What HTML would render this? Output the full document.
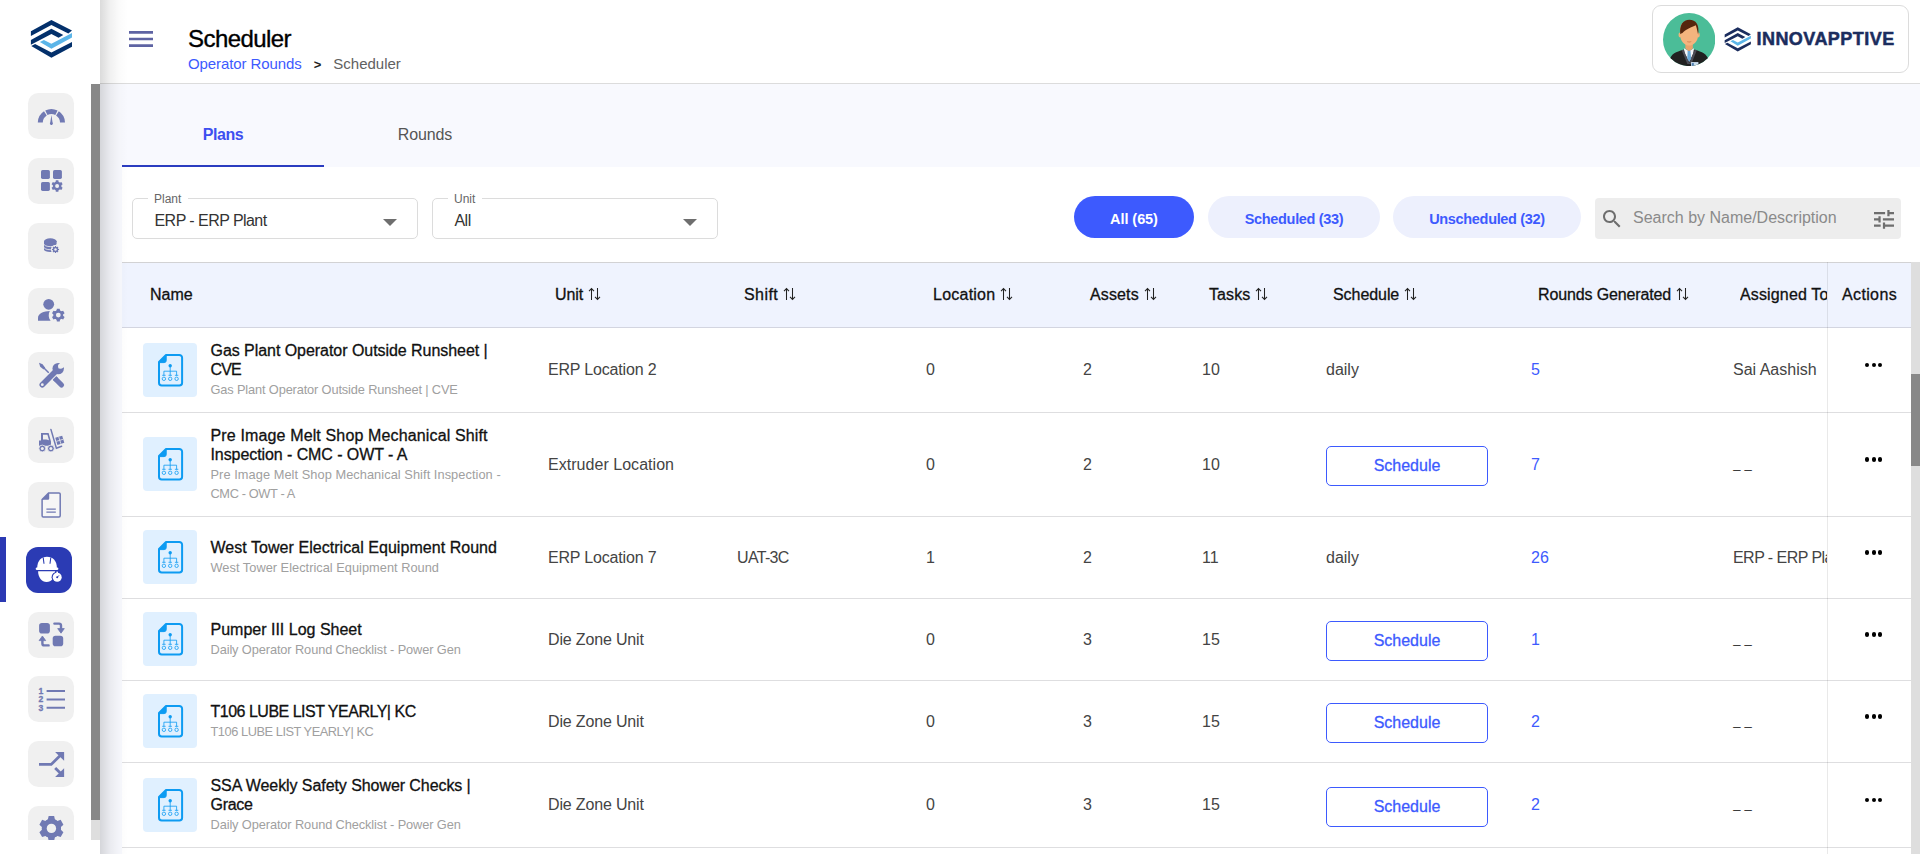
<!DOCTYPE html>
<html lang="en">
<head>
<meta charset="utf-8">
<title>Scheduler</title>
<style>
*{box-sizing:border-box;margin:0;padding:0}
html,body{width:1920px;height:854px;overflow:hidden;background:#fff;font-family:"Liberation Sans",sans-serif;color:#000}
.abs{position:absolute}
#side{position:absolute;left:0;top:0;width:100px;height:854px;background:#fff}
.sb{position:absolute;left:28px;width:46px;height:46px;border-radius:10.5px;background:#f0f0f0}
.sb svg{position:absolute;left:0;top:0;width:46px;height:46px}
.sb.act{left:26px;background:#2b3bb4;border-radius:12px}
#sscroll{position:absolute;left:0;top:84px;width:91px;height:756px;overflow:hidden}
#sthumb{position:absolute;left:91px;top:84px;width:9px;height:736px;background:#888}
#strack{position:absolute;left:91px;top:820px;width:9px;height:20px;background:#dedede}
#actbar{position:absolute;left:0;top:537px;width:6px;height:65px;background:#2b39b3}
#main{position:absolute;left:100px;top:0;width:1820px;height:854px;background:#f8f9fe}
#hdr{position:absolute;left:0;top:0;width:1820px;height:84px;background:#fff;border-bottom:1px solid #dcdcdc}
#shadow{position:absolute;left:0;top:0;width:28px;height:854px;background:linear-gradient(to right,rgba(0,0,0,.14),rgba(0,0,0,.055) 38%,rgba(0,0,0,.015) 70%,rgba(0,0,0,0));pointer-events:none;z-index:50}
#title{position:absolute;left:88px;top:25px;font-size:24px;line-height:28px;color:#000;white-space:nowrap;letter-spacing:-0.56px;-webkit-text-stroke:0.35px #000}
#crumb{position:absolute;left:88px;top:54px;font-size:15px;line-height:19px;white-space:nowrap;color:#616161}
#crumb a{color:#3d5afe;text-decoration:none;letter-spacing:-0.09px}
#crumb b{font-weight:bold;color:#222;margin:0 12px 0 12px;font-size:13px}
#user{position:absolute;left:1552px;top:5px;width:257px;height:68px;border:1px solid #dcdcdc;border-radius:9px;background:#fff}
#brand{position:absolute;left:103.5px;top:22px;font-size:18px;line-height:22px;font-weight:bold;color:#1b2d5e;white-space:nowrap;letter-spacing:0.45px;-webkit-text-stroke:0.5px #1b2d5e}
.tab{position:absolute;top:84px;width:202px;height:83px;font-size:16px;line-height:102px;text-align:center;color:#555}
#panel{position:absolute;left:22px;top:167px;width:1798px;height:687px;background:#fff}
.sel{position:absolute;top:31px;width:286px;height:41px;border:1px solid #dcdcdc;border-radius:5px}
.sel .lb{position:absolute;left:15px;top:-7px;background:#fff;padding:0 7px 0 6px;font-size:12px;line-height:14px;color:#666}
.sel .vl{position:absolute;left:21.5px;top:12px;font-size:16px;line-height:19px;color:#333;white-space:nowrap;letter-spacing:-0.55px}
.sel .ar{position:absolute;right:20px;top:20px;width:0;height:0;border-left:7px solid transparent;border-right:7px solid transparent;border-top:7px solid #6e6e6e}
.pill{position:absolute;top:29px;height:42px;border-radius:21px;background:#edf0fd;color:#3d5afe;font-weight:bold;font-size:14.5px;line-height:46.5px;text-align:center;white-space:nowrap;letter-spacing:-0.33px}
.pill.on{background:#3d5afe;color:#fff}
#search{position:absolute;left:1473px;top:31px;width:306px;height:41px;border-radius:4px;background:#ededed}
#search span{position:absolute;left:38px;top:10px;font-size:16px;line-height:19px;color:#8a8a8a;white-space:nowrap}
#thead{position:absolute;left:0;top:95px;width:1789px;height:66px;background:#eff3fe;border-top:1px solid #d2d2d4;border-bottom:1px solid #d3d5e0}
.srt{position:absolute;top:24px}
#thead div{position:absolute;top:22px;font-size:16px;line-height:19px;color:#111;white-space:nowrap;-webkit-text-stroke:0.3px #111}
.row{position:absolute;left:0;width:1789px;border-bottom:1px solid #dedee0}
.ic{position:absolute;left:21px;width:54px;height:54px;border-radius:4px;background:#e0f0ff}
.nm{position:absolute;left:88.5px;white-space:nowrap;-webkit-text-stroke:0.3px #111;width:300px;font-size:16px;line-height:19px;color:#111}
.ds{position:absolute;left:88.5px;white-space:nowrap;width:300px;font-size:12.8px;line-height:19px;color:#a0a0a0}
.c{position:absolute;font-size:16px;line-height:19px;color:#444;white-space:nowrap}
.lk{color:#3d5afe}
.asg{width:94px;overflow:hidden}
.dash{font-size:13px;color:#1a1a1a;word-spacing:0.4px}
.btn{position:absolute;left:1204px;width:162px;height:40px;border:1px solid #3d5afe;border-radius:5px;color:#3d5afe;font-size:16px;line-height:38px;text-align:center;-webkit-text-stroke:0.3px #3d5afe}
#actcol{position:absolute;left:1705px;top:95px;width:84px;height:592px;border-left:1px solid rgba(0,0,0,.085)}
.dots{position:absolute;left:1743px;width:20px;height:6px}
.dots i{position:absolute;top:0;width:4.3px;height:4.3px;border-radius:50%;background:#000}
#vtrack{position:absolute;left:1789px;top:95px;width:9px;height:592px;background:#dedede}
#vthumb{position:absolute;left:1789px;top:207px;width:9px;height:92px;background:#888}
</style>
</head>
<body>
<svg width="0" height="0" style="position:absolute">
<defs>
<symbol id="docic" viewBox="0 0 54 54">
<path d="M23 12 H36.3 a2.8 2.8 0 0 1 2.8 2.8 V39.8 a2.8 2.8 0 0 1 -2.8 2.8 H18.8 a2.8 2.8 0 0 1 -2.8 -2.8 V19 Z" fill="none" stroke="#0d9bf2" stroke-width="2" stroke-linejoin="round"/>
<path d="M23.2 12 V17.6 a2 2 0 0 1 -2 2 H16 Z" fill="#0d9bf2" stroke="#0d9bf2" stroke-width="1" stroke-linejoin="round"/>
<circle cx="27.2" cy="22.7" r="1.7" fill="#0d9bf2"/>
<path d="M27.2 24 V32.5 M20.9 32.5 V28.2 H33.6 V32.5 M19.2 32.3 H22.6 M25.5 32.3 H28.9 M31.9 32.3 H35.3" fill="none" stroke="#0d9bf2" stroke-width="0.8"/>
<circle cx="20.9" cy="35.8" r="1.7" fill="none" stroke="#0d9bf2" stroke-width="0.8"/>
<circle cx="27.2" cy="35.8" r="1.7" fill="none" stroke="#0d9bf2" stroke-width="0.8"/>
<circle cx="33.6" cy="35.8" r="1.7" fill="none" stroke="#0d9bf2" stroke-width="0.8"/>
</symbol>
</defs>
</svg>
<div id="side">
<svg class="abs" style="left:20px;top:8px" width="60" height="60" viewBox="0 0 854 854">
<polygon points="155,330 447,170 740,322 688,362 447,243 155,397" fill="#03306b"/>
<polygon points="155,457 447,297 616,385 549,423 447,370 155,522" fill="#03306b"/>
<polygon points="340,455 447,510 740,355 740,420 447,580 283,483" fill="#5bb5e8"/>
<polygon points="215,512 447,635 740,485 740,550 447,708 160,540" fill="#03306b"/>
</svg>
<div id="sscroll">
<div class="sb" style="top:9px"><svg viewBox="0 0 46 46"><path d="M9.80 29.60 A13.6 13.6 0 0 1 15.99 18.19 L18.72 22.39 A8.6 8.6 0 0 0 14.80 29.60Z" fill="#7079b3"/><path d="M17.23 17.48 A13.6 13.6 0 0 1 29.57 17.48 L27.30 21.94 A8.6 8.6 0 0 0 19.50 21.94Z" fill="#7079b3"/><path d="M30.81 18.19 A13.6 13.6 0 0 1 37.00 29.60 L32.00 29.60 A8.6 8.6 0 0 0 28.08 22.39Z" fill="#7079b3"/><path d="M23.4 22 L24.5 29.3 A1.5 1.5 0 1 1 22.3 29.3Z" fill="#7079b3"/></svg></div>
<div class="sb" style="top:74px"><svg viewBox="0 0 46 46"><rect x="13" y="12" width="8.9" height="8.9" rx="1.6" fill="#7079b3"/><rect x="25" y="12" width="8.9" height="8.9" rx="1.6" fill="#7079b3"/><rect x="13" y="24" width="8.9" height="8.9" rx="1.6" fill="#7079b3"/><circle cx="29.1" cy="28" r="4.2" fill="#7079b3"/><path d="M27.57 24.09 L27.83 22.34 L30.37 22.34 L30.63 24.09 L31.72 24.72 L33.37 24.07 L34.63 26.27 L33.25 27.37 L33.25 28.63 L34.63 29.73 L33.37 31.93 L31.72 31.28 L30.63 31.91 L30.37 33.66 L27.83 33.66 L27.57 31.91 L26.48 31.28 L24.83 31.93 L23.57 29.73 L24.95 28.63 L24.95 27.37 L23.57 26.27 L24.83 24.07 L26.48 24.72Z" fill="#7079b3"/><circle cx="29.1" cy="28" r="2.0" fill="#f0f0f0"/></svg></div>
<div class="sb" style="top:139px"><svg viewBox="0 0 46 46"><path d="M16 18.3 V26.5 a6.3 2.6 0 0 0 12.6 0 V18.3Z" fill="#7079b3"/><ellipse cx="22.3" cy="18.2" rx="6.3" ry="2.9" fill="#7079b3"/><path d="M16 21.2 a6.3 2.4 0 0 0 12.6 0 M16 24.3 a6.3 2.4 0 0 0 12.6 0" fill="none" stroke="#f0f0f0" stroke-width="0.8"/><circle cx="27.5" cy="26.5" r="4.6" fill="#f0f0f0"/><circle cx="27.5" cy="26.5" r="2.6" fill="#7079b3"/><path d="M26.81 23.99 L26.94 22.94 L28.06 22.94 L28.19 23.99 L28.79 24.24 L29.62 23.59 L30.41 24.38 L29.76 25.21 L30.01 25.81 L31.06 25.94 L31.06 27.06 L30.01 27.19 L29.76 27.79 L30.41 28.62 L29.62 29.41 L28.79 28.76 L28.19 29.01 L28.06 30.06 L26.94 30.06 L26.81 29.01 L26.21 28.76 L25.38 29.41 L24.59 28.62 L25.24 27.79 L24.99 27.19 L23.94 27.06 L23.94 25.94 L24.99 25.81 L25.24 25.21 L24.59 24.38 L25.38 23.59 L26.21 24.24Z" fill="#7079b3"/><circle cx="27.5" cy="26.5" r="1.2" fill="#f0f0f0"/></svg></div>
<div class="sb" style="top:204px"><svg viewBox="0 0 46 46"><circle cx="20.7" cy="16.3" r="5.4" fill="#7079b3"/><path d="M10 32.8 V30 C10 25.5 16 23.2 21.8 23.1 C20.2 26 20.3 30 22.6 32.8Z" fill="#7079b3"/><circle cx="30.3" cy="27.1" r="4.8" fill="#7079b3"/><path d="M28.55 22.63 L28.86 20.66 L31.74 20.66 L32.05 22.63 L33.29 23.35 L35.16 22.63 L36.60 25.13 L35.05 26.38 L35.05 27.82 L36.60 29.07 L35.16 31.57 L33.29 30.85 L32.05 31.57 L31.74 33.54 L28.86 33.54 L28.55 31.57 L27.31 30.85 L25.44 31.57 L24.00 29.07 L25.55 27.82 L25.55 26.38 L24.00 25.13 L25.44 22.63 L27.31 23.35Z" fill="#7079b3"/><circle cx="30.3" cy="27.1" r="2.4" fill="#f0f0f0"/></svg></div>
<div class="sb" style="top:268px"><svg viewBox="0 0 46 46"><path d="M11 10.8 L14.6 12.2 L17.2 15.8 L15.6 17.4 L12.2 14.8 Z" fill="#7079b3"/><path d="M15.5 15.5 L21 21" stroke="#7079b3" stroke-width="1.5" fill="none"/><path d="M27 26.5 L33.5 33" stroke="#7079b3" stroke-width="5.2" stroke-linecap="round" fill="none"/><path d="M24.6 27.4 L27.9 24.1 L30 26 L26.5 29.5Z" fill="#7079b3"/><path d="M14.3 32.7 L27.5 19.5" stroke="#f0f0f0" stroke-width="7.6" stroke-linecap="butt" fill="none"/><path d="M14.3 32.7 L27.5 19.5" stroke="#7079b3" stroke-width="5.6" stroke-linecap="round" fill="none"/><circle cx="30.2" cy="16.6" r="5.7" fill="#7079b3"/><path d="M30.4 16.4 L32.8 8.6 L39 14.4 Z" fill="#f0f0f0"/><circle cx="32.7" cy="14.1" r="2.7" fill="#f0f0f0"/><circle cx="14.3" cy="32.7" r="1.4" fill="#f0f0f0"/></svg></div>
<div class="sb" style="top:333px"><svg viewBox="0 0 46 46"><path d="M11 28.8 V23.4 H13 V16 H20.6 L23 24.5 V28.8Z" fill="#7079b3"/><path d="M15 17.8 H19.4 L21 23.2 L18.5 22.4 H15Z" fill="#f0f0f0"/><circle cx="14.3" cy="31.5" r="3.4" fill="#7079b3" stroke="#f0f0f0" stroke-width="0.8"/><circle cx="14.3" cy="31.5" r="1.5" fill="#f0f0f0"/><circle cx="22.9" cy="31.5" r="3.4" fill="#7079b3" stroke="#f0f0f0" stroke-width="0.8"/><circle cx="22.9" cy="31.5" r="1.5" fill="#f0f0f0"/><path d="M22.9 12.4 L28.4 31.2 L33.6 29.3" fill="none" stroke="#7079b3" stroke-width="1.5" stroke-linecap="round"/><g transform="rotate(-17 31.8 23.3)"><rect x="28.2" y="19.6" width="7.2" height="7.4" fill="#7079b3"/><path d="M31.8 19.6 V27 M28.2 23.3 H35.4" stroke="#f0f0f0" stroke-width="0.7"/></g></svg></div>
<div class="sb" style="top:398px"><svg viewBox="0 0 46 46"><path d="M20.8 10.9 H31 a1.2 1.2 0 0 1 1.2 1.2 V33.8 a1.2 1.2 0 0 1 -1.2 1.2 H15.3 a1.2 1.2 0 0 1 -1.2 -1.2 V17.6 Z" fill="#f6f6f6" stroke="#7079b3" stroke-width="1.5" stroke-linejoin="round"/><path d="M21.2 10.9 V16.6 a1.2 1.2 0 0 1 -1.2 1.2 H14.1 Z" fill="#7079b3"/><path d="M18.4 27.1 H27.8 M18.4 30.1 H27.8" stroke="#7079b3" stroke-width="1.3"/></svg></div>
<div class="sb act" style="top:463px"><svg viewBox="0 0 46 46"><path d="M11.2 21 C11.2 13.5 15.5 9.7 21 9.7 C26.6 9.7 30.9 13.5 30.9 21 Z" fill="#fff"/><rect x="9.7" y="20.4" width="22.7" height="2.6" rx="1.3" fill="#fff"/><path d="M17.2 10.5 L18 16.8 M24.8 10.5 L24 16.8" stroke="#2b3db2" stroke-width="1.1" fill="none"/><path d="M12.1 24.3 H29.1 C29.1 30.5 25.5 35 20.6 35 C15.7 35 12.1 30.5 12.1 24.3Z" fill="#fff"/><circle cx="31.2" cy="30.3" r="5.6" fill="#2b3db2"/><circle cx="31.2" cy="30.3" r="4.5" fill="#fff"/><rect x="30.4" y="24.6" width="1.6" height="1.6" fill="#fff"/><circle cx="31.2" cy="30.3" r="1" fill="#2b3db2"/><path d="M31.2 30.3 L33 28.4" stroke="#2b3db2" stroke-width="0.9"/></svg></div>
<div class="sb" style="top:528px"><svg viewBox="0 0 46 46"><rect x="11.1" y="10.9" width="10.8" height="10.7" rx="2.8" fill="#7079b3"/><rect x="24.7" y="23.7" width="10.5" height="10.5" rx="2.8" fill="#7079b3"/><path d="M26.4 11.6 H31 a2 2 0 0 1 2 2 V18" fill="none" stroke="#7079b3" stroke-width="2.4" stroke-linecap="round"/><path d="M29.7 16.6 H36.3 L33 21.2Z" fill="#7079b3" stroke="#7079b3" stroke-width="0.8" stroke-linejoin="round"/><path d="M20.6 33.4 H16.4 a2 2 0 0 1 -2 -2 V27" fill="none" stroke="#7079b3" stroke-width="2.4" stroke-linecap="round"/><path d="M11.1 28.6 H17.7 L14.4 24Z" fill="#7079b3" stroke="#7079b3" stroke-width="0.8" stroke-linejoin="round"/></svg></div>
<div class="sb" style="top:592px"><svg viewBox="0 0 46 46"><path d="M18.6 15.1 H37 M18.6 23.4 H37 M18.6 31.7 H37" stroke="#7079b3" stroke-width="2"/><text x="10.6" y="17.8" font-family="Liberation Sans, sans-serif" font-weight="bold" font-size="8.6" stroke="#7079b3" stroke-width="0.3" fill="#7079b3">1</text><text x="10.6" y="26.1" font-family="Liberation Sans, sans-serif" font-weight="bold" font-size="8.6" stroke="#7079b3" stroke-width="0.3" fill="#7079b3">2</text><text x="10.6" y="34.5" font-family="Liberation Sans, sans-serif" font-weight="bold" font-size="8.6" stroke="#7079b3" stroke-width="0.3" fill="#7079b3">3</text></svg></div>
<div class="sb" style="top:657px"><svg viewBox="0 0 46 46"><path d="M11 23.4 H23.2 L33 13.8" fill="none" stroke="#7079b3" stroke-width="2.8"/><path d="M27.1 10.9 H36.1 V19.7Z" fill="#7079b3"/><path d="M27.2 27 L33 32.8" fill="none" stroke="#7079b3" stroke-width="2.8"/><path d="M36.1 27.3 V36 H27.1Z" fill="#7079b3"/></svg></div>
<div class="sb" style="top:722px"><svg viewBox="0 0 46 46"><circle cx="23.4" cy="22.4" r="9.6" fill="#7079b3"/><path d="M19.89 13.46 L20.65 10.10 L26.15 10.10 L26.91 13.46 L29.39 14.90 L32.67 13.87 L35.42 18.63 L32.89 20.97 L32.89 23.83 L35.42 26.17 L32.67 30.93 L29.39 29.90 L26.91 31.34 L26.15 34.70 L20.65 34.70 L19.89 31.34 L17.41 29.90 L14.13 30.93 L11.38 26.17 L13.91 23.83 L13.91 20.97 L11.38 18.63 L14.13 13.87 L17.41 14.90Z" fill="#7079b3"/><circle cx="23.4" cy="22.4" r="4.7" fill="#f0f0f0"/></svg></div>
</div>
  <div id="sthumb"></div><div id="strack"></div><div id="actbar"></div>
</div><!--/side-->
<div id="main">
  <div id="hdr">
    <svg class="abs" style="left:25.4px;top:23px" width="32" height="32" viewBox="0 0 24 24"><path fill="#5e63a3" d="M3 18h18v-2H3v2zm0-5h18v-2H3v2zm0-7v2h18V6H3z"/></svg>
    <div id="title">Scheduler</div>
    <div id="crumb"><a>Operator Rounds</a><b>&gt;</b>Scheduler</div>
    <div id="user">
<svg class="abs" style="left:9.9px;top:6.6px" width="52.3" height="53.1" viewBox="0 0 52.6 52.6" preserveAspectRatio="none">
<defs><clipPath id="avc"><circle cx="26.3" cy="26.3" r="26.3"/></clipPath></defs>
<circle cx="26.3" cy="26.3" r="26.3" fill="#4bbd98"/>
<g clip-path="url(#avc)">
<path d="M7 46 C8 40.5 13 38.6 20.5 36.4 H32 C39.5 38.6 44 40.5 45.6 46 L46 54 H6Z" fill="#212121"/>
<path d="M21 35 L26.2 37.6 L31.2 35 L30.4 40 L26.6 48.2 L21.8 40Z" fill="#f4f4f6"/>
<path d="M20.6 36.2 L26.4 49.5 L32 36.2 L34 37 L28.5 50.5 H24.5 L18.8 37Z" fill="#4b4b55"/>
<path d="M24.8 37.4 H27.6 L28.3 45 L26.3 48.5 L24.4 45Z" fill="#6aa9d8"/>
<rect x="28.2" y="48.6" width="7.4" height="5" fill="#c9dcec"/><rect x="29" y="49.6" width="2" height="3" fill="#4f7fb0"/>
<path d="M22.5 28 H30 V35.2 L26.2 37.8 L22.5 35.2Z" fill="#e9a36c"/>
<ellipse cx="17.2" cy="21.8" rx="1.6" ry="2.4" fill="#f2b27a"/><ellipse cx="35.4" cy="21.8" rx="1.6" ry="2.4" fill="#f2b27a"/>
<path d="M17.3 17 C17.3 10 21 7.5 26.3 7.5 C31.6 7.5 35.3 10 35.3 17 V22 C35.3 27.5 31 32.3 26.3 32.3 C21.6 32.3 17.3 27.5 17.3 22Z" fill="#f4b47e"/>
<path d="M17.4 21 C16.2 12 20 6.6 26.6 6.6 C33 6.6 37 11.5 35.3 21.5 C34.6 18.5 34.2 15.5 33 12.2 C29 13.8 22.5 16.5 19.6 19.8 C18.6 20 18 20.5 17.4 21Z" fill="#55260e"/>
<path d="M24.2 28.3 Q26.3 29.6 28.4 28.3 Q26.3 28.9 24.2 28.3Z" fill="#d98d5c" stroke="#d98d5c" stroke-width="0.5"/>
</g>
</svg>
<svg class="abs" style="left:71.3px;top:19.7px" width="27.6" height="27.6" viewBox="140 140 616 616">
<polygon points="155,330 447,170 740,322 688,362 447,243 155,397" fill="#1b2d5e"/>
<polygon points="155,457 447,297 616,385 549,423 447,370 155,522" fill="#1b2d5e"/>
<polygon points="340,455 447,510 740,355 740,420 447,580 283,483" fill="#5bb5e8"/>
<polygon points="215,512 447,635 740,485 740,550 447,708 160,540" fill="#1b2d5e"/>
</svg>
<div id="brand">INNOVAPPTIVE</div>
</div>
  </div>
  <div class="tab" style="left:22px;color:#3d4ff0;font-weight:bold;letter-spacing:-0.44px">Plans</div>
  <div class="tab" style="left:224px;letter-spacing:-0.1px">Rounds</div>
  <div class="abs" style="left:22px;top:165px;width:202px;height:2px;background:#2b3cc0"></div>
  <div id="panel">
    <div class="sel" style="left:10px"><span class="lb">Plant</span><span class="vl">ERP - ERP Plant</span><span class="ar"></span></div>
    <div class="sel" style="left:310px"><span class="lb">Unit</span><span class="vl">All</span><span class="ar"></span></div>
    <div class="pill on" style="left:952px;width:120px;letter-spacing:-0.07px">All (65)</div>
    <div class="pill" style="left:1086px;width:172px">Scheduled (33)</div>
    <div class="pill" style="left:1271px;width:188px">Unscheduled (32)</div>
    <div id="search"><svg class="abs" style="left:5.3px;top:8.6px" width="24" height="24" viewBox="0 0 24 24"><path fill="#6e6e6e" d="M15.5 14h-.79l-.28-.27C15.41 12.59 16 11.11 16 9.5 16 5.91 13.09 3 9.5 3S3 5.91 3 9.5 5.91 16 9.5 16c1.61 0 3.09-.59 4.23-1.57l.27.28v.79l5 4.99L20.49 19l-4.99-5zm-6 0C7.01 14 5 11.99 5 9.5S7.01 5 9.5 5 14 7.01 14 9.5 11.99 14 9.5 14z"/></svg><span>Search by Name/Description</span><svg class="abs" style="left:279.2px;top:12px" width="20" height="18.8" viewBox="3 3 18 18" preserveAspectRatio="none"><path fill="#6e6e6e" d="M3 17v2h6v-2H3zM3 5v2h10V5H3zm10 16v-2h8v-2h-8v-2h-2v6h2zM7 9v2H3v2h4v2h2V9H7zm14 4v-2H11v2h10zm-6-4h2V7h4V5h-4V3h-2v6z"/></svg></div>
    <div id="thead">
      <div style="left:28px;letter-spacing:-0.022px">Name</div>
      <div style="left:433px;letter-spacing:-0.063px">Unit</div>
      <div style="left:622px;letter-spacing:0.437px">Shift</div>
      <div style="left:811px;letter-spacing:0.237px">Location</div>
      <div style="left:968px;letter-spacing:0.131px">Assets</div>
      <div style="left:1087px;letter-spacing:0.099px">Tasks</div>
      <div style="left:1211px;letter-spacing:-0.065px">Schedule</div>
      <div style="left:1416px;letter-spacing:-0.138px">Rounds Generated</div>
      <div style="left:1618px;width:87px;overflow:hidden;letter-spacing:0.15px">Assigned To</div>
      <div style="left:1720px;letter-spacing:0.362px">Actions</div>
      <svg class="srt" style="left:466px" width="14" height="14" viewBox="0 0 14 14"><path d="M3.5 13 V1.6 M1 4.2 L3.5 1.6 L6 4.2 M9.5 1 V12.4 M7 9.8 L9.5 12.4 L12 9.8" fill="none" stroke="#222" stroke-width="1.05"/></svg><svg class="srt" style="left:661px" width="14" height="14" viewBox="0 0 14 14"><path d="M3.5 13 V1.6 M1 4.2 L3.5 1.6 L6 4.2 M9.5 1 V12.4 M7 9.8 L9.5 12.4 L12 9.8" fill="none" stroke="#222" stroke-width="1.05"/></svg><svg class="srt" style="left:878px" width="14" height="14" viewBox="0 0 14 14"><path d="M3.5 13 V1.6 M1 4.2 L3.5 1.6 L6 4.2 M9.5 1 V12.4 M7 9.8 L9.5 12.4 L12 9.8" fill="none" stroke="#222" stroke-width="1.05"/></svg><svg class="srt" style="left:1022px" width="14" height="14" viewBox="0 0 14 14"><path d="M3.5 13 V1.6 M1 4.2 L3.5 1.6 L6 4.2 M9.5 1 V12.4 M7 9.8 L9.5 12.4 L12 9.8" fill="none" stroke="#222" stroke-width="1.05"/></svg><svg class="srt" style="left:1133px" width="14" height="14" viewBox="0 0 14 14"><path d="M3.5 13 V1.6 M1 4.2 L3.5 1.6 L6 4.2 M9.5 1 V12.4 M7 9.8 L9.5 12.4 L12 9.8" fill="none" stroke="#222" stroke-width="1.05"/></svg><svg class="srt" style="left:1282px" width="14" height="14" viewBox="0 0 14 14"><path d="M3.5 13 V1.6 M1 4.2 L3.5 1.6 L6 4.2 M9.5 1 V12.4 M7 9.8 L9.5 12.4 L12 9.8" fill="none" stroke="#222" stroke-width="1.05"/></svg><svg class="srt" style="left:1554px" width="14" height="14" viewBox="0 0 14 14"><path d="M3.5 13 V1.6 M1 4.2 L3.5 1.6 L6 4.2 M9.5 1 V12.4 M7 9.8 L9.5 12.4 L12 9.8" fill="none" stroke="#222" stroke-width="1.05"/></svg>
    </div>
    <div id="rows">
<div class="row" style="top:161px;height:85px">
<div class="ic" style="top:15px"><svg viewBox="0 0 54 54" width="54" height="54"><use href="#docic"/></svg></div>
<div class="nm" style="top:13px;letter-spacing:-0.048px">Gas Plant Operator Outside Runsheet |</div>
<div class="nm" style="top:32px;letter-spacing:-0.902px">CVE</div>
<div class="ds" style="top:52px;letter-spacing:-0.141px">Gas Plant Operator Outside Runsheet | CVE</div>
<div class="c" style="left:426px;top:32px;letter-spacing:-0.178px">ERP Location 2</div>
<div class="c" style="left:804px;top:32px">0</div>
<div class="c" style="left:961px;top:32px">2</div>
<div class="c" style="left:1080px;top:32px">10</div>
<div class="c" style="left:1204px;top:32px">daily</div>
<div class="c lk" style="left:1409px;top:32px">5</div>
<div class="c asg" style="left:1611px;top:32px">Sai Aashish</div>
<div class="dots" style="top:34.89999999999998px"><i style="left:0.1px"></i><i style="left:6.65px"></i><i style="left:13.2px"></i></div>
</div>
<div class="row" style="top:246px;height:104px">
<div class="ic" style="top:24px"><svg viewBox="0 0 54 54" width="54" height="54"><use href="#docic"/></svg></div>
<div class="nm" style="top:13px;letter-spacing:0.141px">Pre Image Melt Shop Mechanical Shift</div>
<div class="nm" style="top:32px;letter-spacing:-0.079px">Inspection - CMC - OWT - A</div>
<div class="ds" style="top:52px;letter-spacing:0.058px">Pre Image Melt Shop Mechanical Shift Inspection -</div>
<div class="ds" style="top:71px;letter-spacing:-0.373px">CMC - OWT - A</div>
<div class="c" style="left:426px;top:42px;letter-spacing:0.035px">Extruder Location</div>
<div class="c" style="left:804px;top:42px">0</div>
<div class="c" style="left:961px;top:42px">2</div>
<div class="c" style="left:1080px;top:42px">10</div>
<div class="btn" style="top:33px">Schedule</div>
<div class="c lk" style="left:1409px;top:42px">7</div>
<div class="c dash" style="left:1611.3px;top:41px">_ _</div>
<div class="dots" style="top:44.39999999999998px"><i style="left:0.1px"></i><i style="left:6.65px"></i><i style="left:13.2px"></i></div>
</div>
<div class="row" style="top:350px;height:82px">
<div class="ic" style="top:13px"><svg viewBox="0 0 54 54" width="54" height="54"><use href="#docic"/></svg></div>
<div class="nm" style="top:21px;letter-spacing:0.044px">West Tower Electrical Equipment Round</div>
<div class="ds" style="top:41px;letter-spacing:0.017px">West Tower Electrical Equipment Round</div>
<div class="c" style="left:426px;top:31px;letter-spacing:-0.178px">ERP Location 7</div>
<div class="c" style="left:615px;top:31px;letter-spacing:-0.67px">UAT-3C</div>
<div class="c" style="left:804px;top:31px">1</div>
<div class="c" style="left:961px;top:31px">2</div>
<div class="c" style="left:1080px;top:31px">11</div>
<div class="c" style="left:1204px;top:31px">daily</div>
<div class="c lk" style="left:1409px;top:31px">26</div>
<div class="c asg" style="left:1611px;top:31px;letter-spacing:-0.55px">ERP - ERP Plant</div>
<div class="dots" style="top:33.39999999999998px"><i style="left:0.1px"></i><i style="left:6.65px"></i><i style="left:13.2px"></i></div>
</div>
<div class="row" style="top:432px;height:82px">
<div class="ic" style="top:13px"><svg viewBox="0 0 54 54" width="54" height="54"><use href="#docic"/></svg></div>
<div class="nm" style="top:21px;letter-spacing:-0.0px">Pumper III Log Sheet</div>
<div class="ds" style="top:41px;letter-spacing:-0.105px">Daily Operator Round Checklist - Power Gen</div>
<div class="c" style="left:426px;top:31px;letter-spacing:-0.164px">Die Zone Unit</div>
<div class="c" style="left:804px;top:31px">0</div>
<div class="c" style="left:961px;top:31px">3</div>
<div class="c" style="left:1080px;top:31px">15</div>
<div class="btn" style="top:22px">Schedule</div>
<div class="c lk" style="left:1409px;top:31px">1</div>
<div class="c dash" style="left:1611.3px;top:30px">_ _</div>
<div class="dots" style="top:33.39999999999998px"><i style="left:0.1px"></i><i style="left:6.65px"></i><i style="left:13.2px"></i></div>
</div>
<div class="row" style="top:514px;height:82px">
<div class="ic" style="top:13px"><svg viewBox="0 0 54 54" width="54" height="54"><use href="#docic"/></svg></div>
<div class="nm" style="top:21px;letter-spacing:-0.496px">T106 LUBE LIST YEARLY| KC</div>
<div class="ds" style="top:41px;letter-spacing:-0.45px">T106 LUBE LIST YEARLY| KC</div>
<div class="c" style="left:426px;top:31px;letter-spacing:-0.164px">Die Zone Unit</div>
<div class="c" style="left:804px;top:31px">0</div>
<div class="c" style="left:961px;top:31px">3</div>
<div class="c" style="left:1080px;top:31px">15</div>
<div class="btn" style="top:22px">Schedule</div>
<div class="c lk" style="left:1409px;top:31px">2</div>
<div class="c dash" style="left:1611.3px;top:30px">_ _</div>
<div class="dots" style="top:33.39999999999998px"><i style="left:0.1px"></i><i style="left:6.65px"></i><i style="left:13.2px"></i></div>
</div>
<div class="row" style="top:596px;height:85px">
<div class="ic" style="top:15px"><svg viewBox="0 0 54 54" width="54" height="54"><use href="#docic"/></svg></div>
<div class="nm" style="top:13px;letter-spacing:-0.074px">SSA Weekly Safety Shower Checks |</div>
<div class="nm" style="top:32px;letter-spacing:-0.276px">Grace</div>
<div class="ds" style="top:52px;letter-spacing:-0.105px">Daily Operator Round Checklist - Power Gen</div>
<div class="c" style="left:426px;top:32px;letter-spacing:-0.164px">Die Zone Unit</div>
<div class="c" style="left:804px;top:32px">0</div>
<div class="c" style="left:961px;top:32px">3</div>
<div class="c" style="left:1080px;top:32px">15</div>
<div class="btn" style="top:24px">Schedule</div>
<div class="c lk" style="left:1409px;top:32px">2</div>
<div class="c dash" style="left:1611.3px;top:31px">_ _</div>
<div class="dots" style="top:34.89999999999998px"><i style="left:0.1px"></i><i style="left:6.65px"></i><i style="left:13.2px"></i></div>
</div>
</div><!--/rows-->
    <div id="actcol"></div>
    <div id="vtrack"></div><div id="vthumb"></div>
  </div>
  <div id="shadow"></div>
</div>
</body>
</html>
